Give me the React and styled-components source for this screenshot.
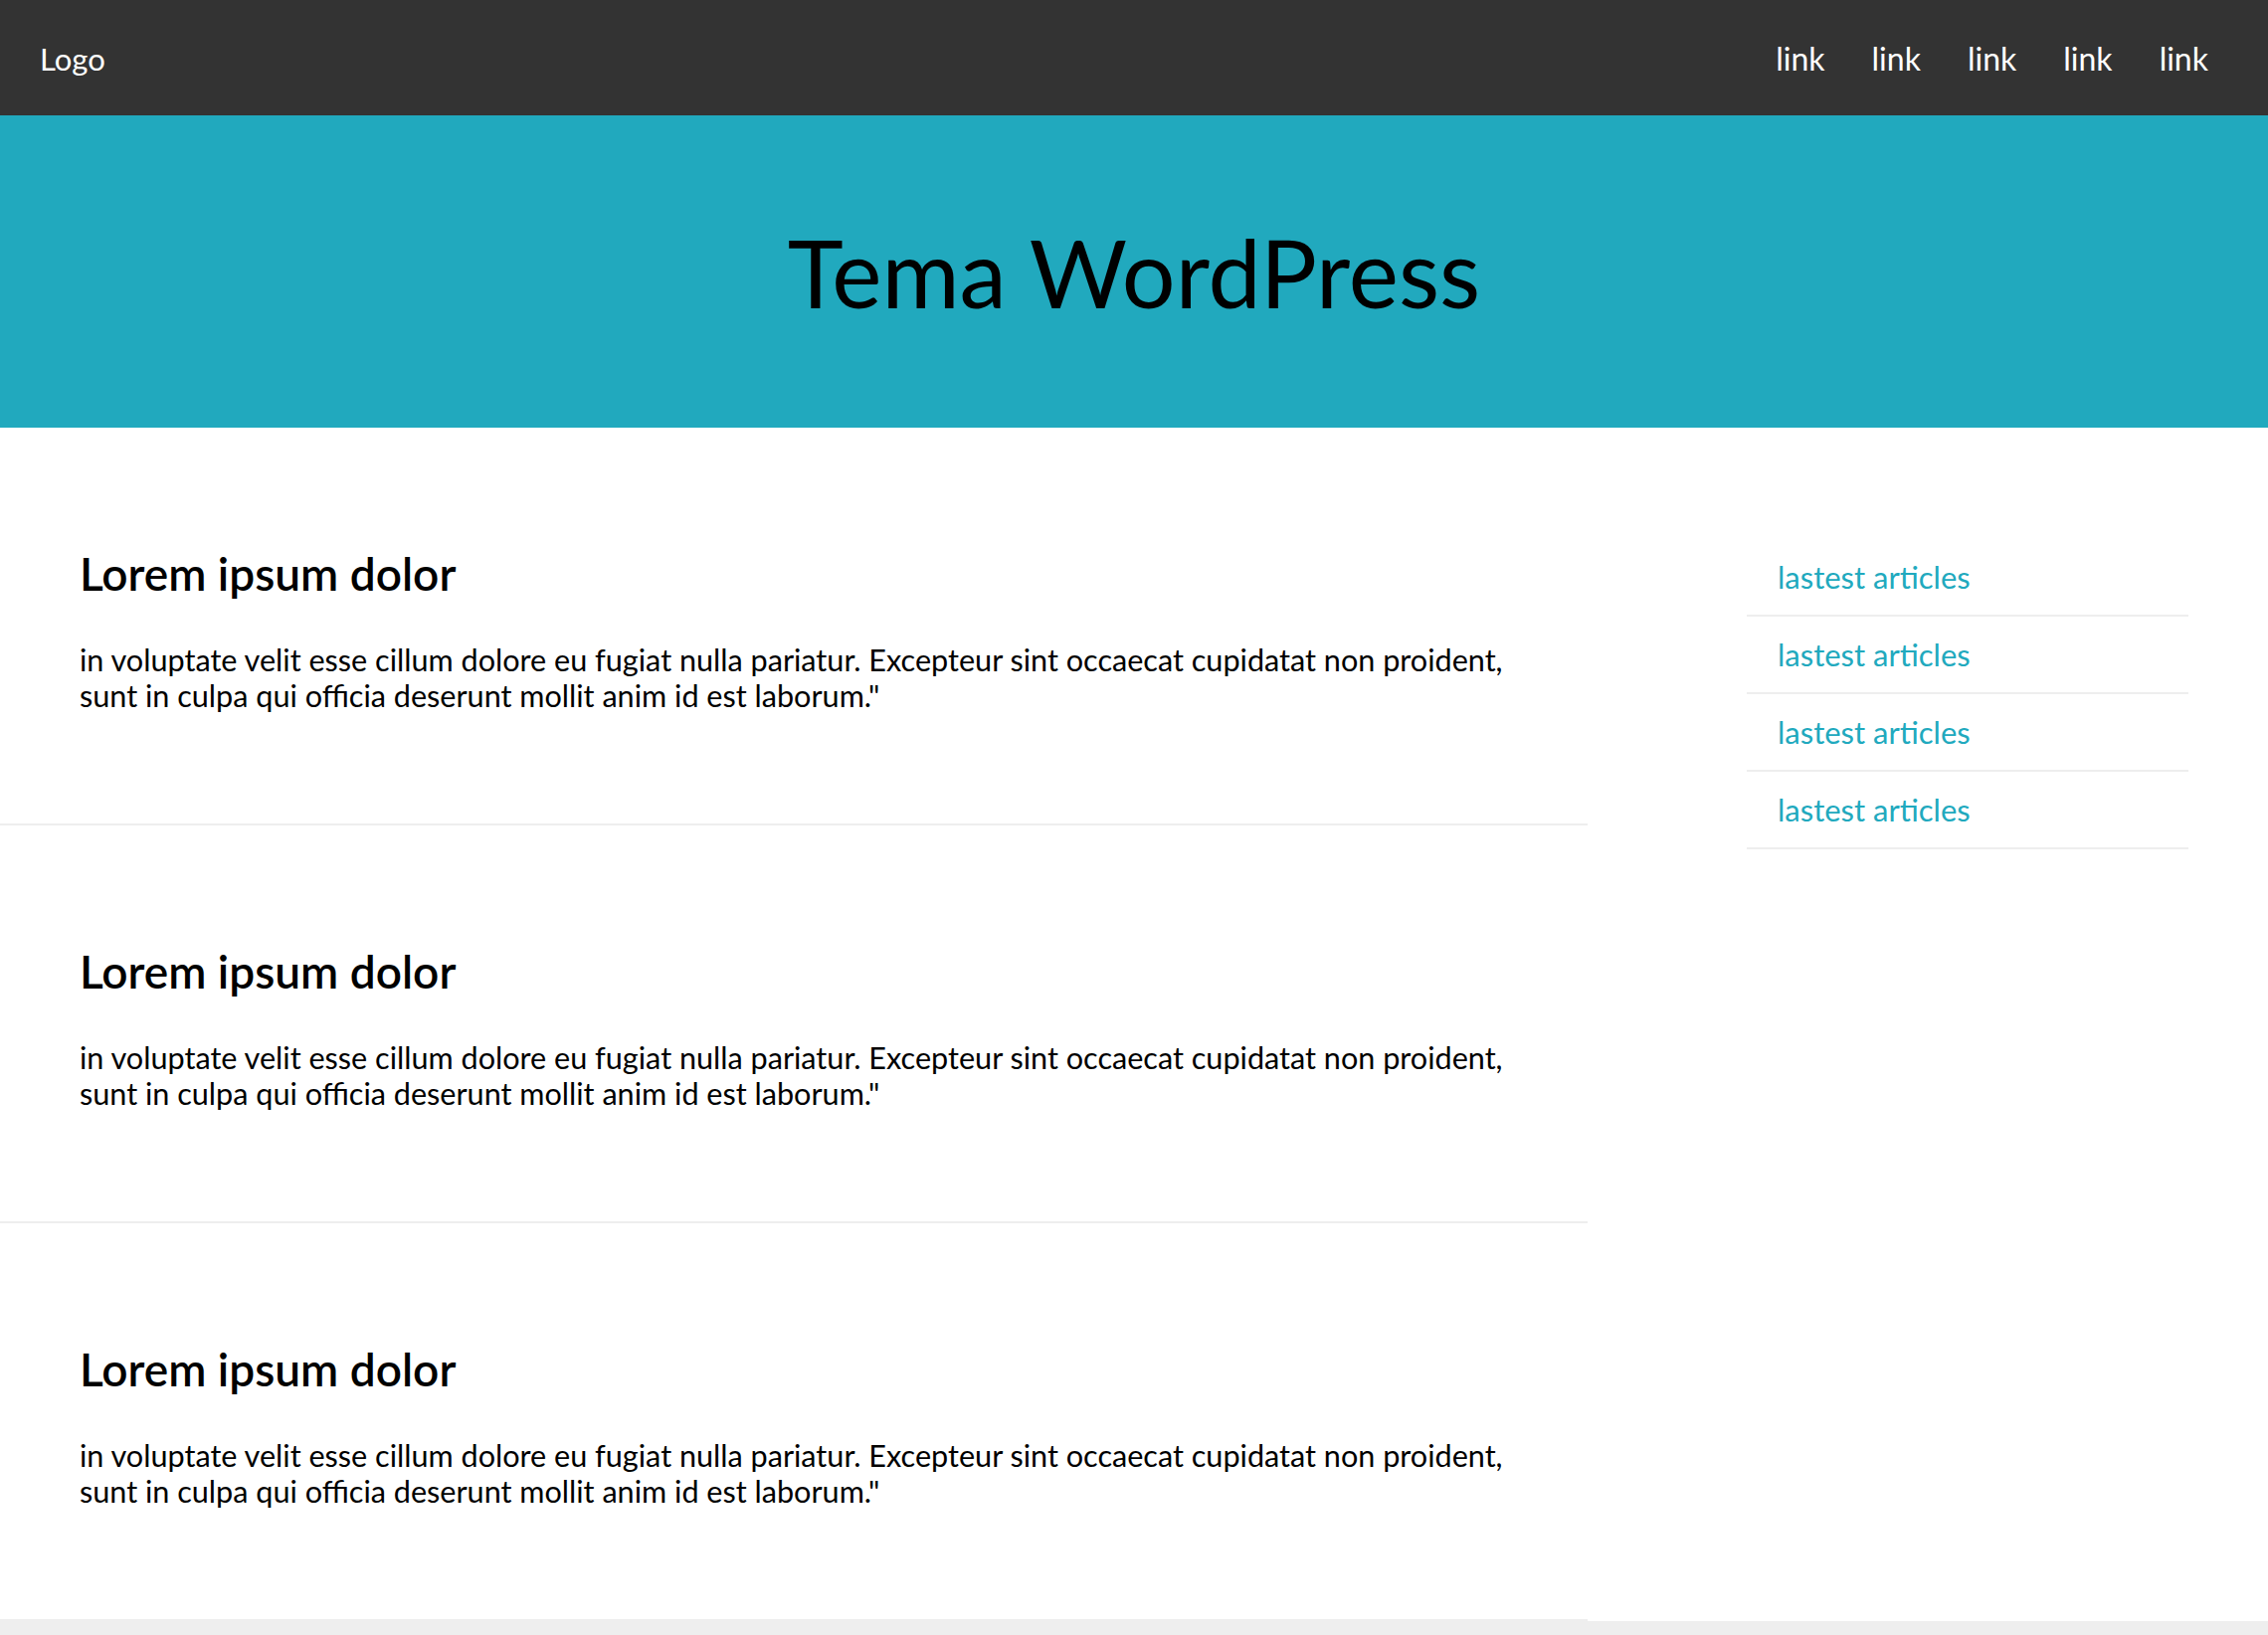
import React from 'react';
import styled, { createGlobalStyle } from 'styled-components';

const TEAL = '#21a9be';

const GlobalStyle = createGlobalStyle`
  *, *::before, *::after {
    box-sizing: border-box;
  }
  html, body {
    margin: 0;
    padding: 0;
  }
  body {
    font-family: Lato, "Open Sans", sans-serif;
    color: #000;
    background: #fff;
  }
`;

const posts = [1, 2, 3].map((id) => ({
  id,
  title: 'Lorem ipsum dolor',
  body:
    'in voluptate velit esse cillum dolore eu fugiat nulla pariatur. Excepteur sint occaecat cupidatat non proident, sunt in culpa qui officia deserunt mollit anim id est laborum."',
}));

const App = () => (
  <Page>
    <GlobalStyle />
    <TopBar>
      <Logo>Logo</Logo>
      <Nav>
        {[0, 1, 2, 3, 4].map((i) => (
          <NavLink key={i} href="#">link</NavLink>
        ))}
      </Nav>
    </TopBar>
    <Hero>
      <HeroTitle>Tema WordPress</HeroTitle>
    </Hero>
    <Main>
      <Posts>
        {posts.map((post) => (
          <Post key={post.id}>
            <PostTitle>{post.title}</PostTitle>
            <PostBody>{post.body}</PostBody>
          </Post>
        ))}
      </Posts>
      <Sidebar>
        <Latest>
          {[0, 1, 2, 3].map((i) => (
            <LatestItem key={i}>
              <LatestLink href="#">lastest articles</LatestLink>
            </LatestItem>
          ))}
        </Latest>
      </Sidebar>
    </Main>
    <Footer />
  </Page>
);

const Page = styled.div`
  min-height: 100vh;
  display: flex;
  flex-direction: column;
`;

const TopBar = styled.header`
  height: 116px;
  background: #333;
  display: flex;
  align-items: center;
  justify-content: space-between;
  padding: 3px 60px 0 40px;
`;

const Logo = styled.div`
  color: #fff;
  font-size: 31px;
  line-height: 1.2;
`;

const Nav = styled.nav`
  display: flex;
  gap: 47px;
`;

const NavLink = styled.a`
  color: #fff;
  font-size: 32px;
  line-height: 1.2;
  text-decoration: none;
`;

const Hero = styled.section`
  height: 314px;
  background: ${TEAL};
  display: flex;
  align-items: center;
  justify-content: center;
`;

const HeroTitle = styled.h1`
  margin: 0;
  font-size: 95px;
  font-weight: 400;
  line-height: 1.2;
  color: #000;
`;

const Main = styled.main`
  display: grid;
  grid-template-columns: 70% 30%;
  background: #fff;
`;

const Posts = styled.div`
  display: flex;
  flex-direction: column;
`;

const Post = styled.article`
  padding: 121px 80px 110px 80px;
  border-bottom: 2px solid #eee;
`;

const PostTitle = styled.h2`
  margin: 0 0 43px;
  font-size: 46px;
  line-height: 52px;
  font-weight: 600;
`;

const PostBody = styled.p`
  margin: 0;
  font-size: 30.6px;
  line-height: 36px;
`;

const Sidebar = styled.aside`
  padding: 112px 80px 0 0;
`;

const Latest = styled.ul`
  list-style: none;
  margin: 0 0 0 160px;
  padding: 0;
`;

const LatestItem = styled.li`
  padding: 19px 0 19px 31px;
  border-bottom: 2px solid #eee;
`;

const LatestLink = styled.a`
  color: ${TEAL};
  font-size: 31px;
  line-height: 38px;
  text-decoration: none;
`;

const Footer = styled.footer`
  flex: 1;
  background: #eee;
`;

export default App;
